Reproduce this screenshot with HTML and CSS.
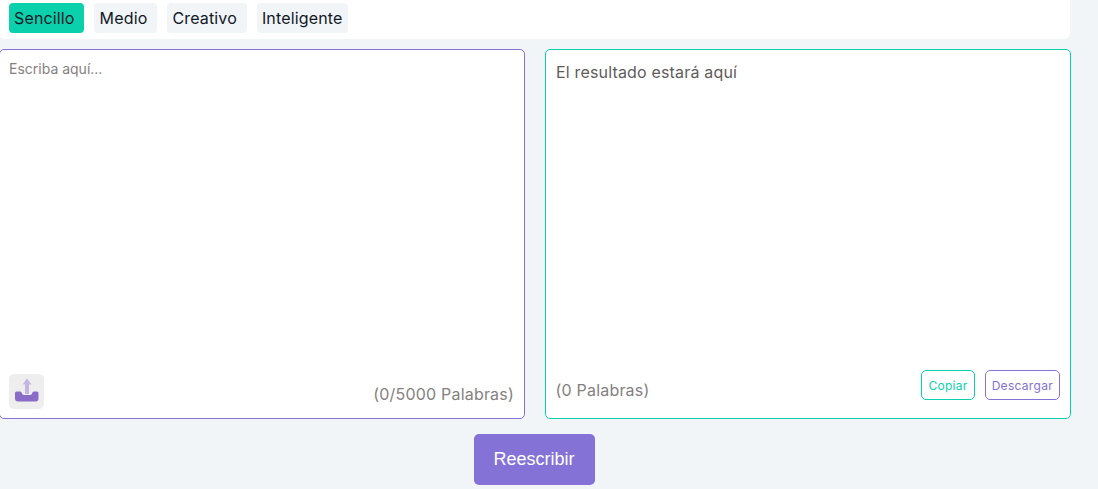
FILE: index.html
```html
<!DOCTYPE html>
<html lang="es">
<head>
    <meta charset="UTF-8">
    <meta name="viewport" content="width=device-width, initial-scale=1.0">
    <title>Reescribir</title>
    <link rel="stylesheet" href="styles.css">
</head>
<body>
    <div class="container">
        <!-- Mode tabs -->
        <nav class="modes">
            <a href="#" class="mode active">Sencillo</a>
            <a href="#" class="mode">Medio</a>
            <a href="#" class="mode">Creativo</a>
            <a href="#" class="mode">Inteligente</a>
        </nav>

        <!-- Input and result panels -->
        <section class="panels">
            <div class="panel panel-input">
                <textarea class="input" placeholder="Escriba aquí..."></textarea>
                <div class="panel-footer">
                    <button class="upload" aria-label="Subir archivo">
                        <svg width="24" height="28" viewBox="0 0 24 28">
                            <path class="arrow" d="M12 0.5 L16.5 6.5 H14 V16 H10 V6.5 H7.5 Z"/>
                            <path class="tray" d="M0 15 Q0 13.5 1.5 13.5 H5 Q6 13.5 6.5 14.5 L7 15.5 Q7.5 17 9 17 H15 Q16.5 17 17 15.5 L17.5 14.5 Q18 13.5 19 13.5 H22 Q23.5 13.5 23.5 15 V20.5 Q23.5 23.5 20.5 23.5 H3 Q0 23.5 0 20.5 Z"/>
                        </svg>
                    </button>
                    <span class="count">(0/5000 Palabras)</span>
                </div>
            </div>
            <div class="panel panel-output">
                <p class="result">El resultado estará aquí</p>
                <div class="panel-footer">
                    <span class="count">(0 Palabras)</span>
                    <div class="actions">
                        <button class="small copy">Copiar</button>
                        <button class="small download">Descargar</button>
                    </div>
                </div>
            </div>
        </section>

        <div class="submit-row">
            <button class="submit">Reescribir</button>
        </div>
    </div>
</body>
</html>
```

FILE: styles.css
```css
/* General layout */
html, body {
    height: 100%;
}
body {
    font-family: Inter, "Liberation Sans", sans-serif;
    background-color: #f1f5f8;
    margin: 0;
    overflow: hidden;
}
.container {
    width: 1072px;
    margin-left: -1px;
}

/* Mode tabs */
.modes {
    display: flex;
    gap: 10px;
    background: #fff;
    padding: 3px 10px 6px;
    margin-right: 1px;
    border-radius: 0 0 6px 6px;
}
.mode {
    height: 30px;
    line-height: 30px;
    padding: 0 10px 0 5px;
    font-size: 16px;
    letter-spacing: 0.15px;
    color: #111827;
    background-color: #f1f5f8;
    border-radius: 4px;
    text-decoration: none;
}
.mode:nth-child(2) {
    padding: 0 10px 0 6px;
}
.mode:last-child {
    padding-right: 5.5px;
}
.mode.active {
    padding-right: 9px;
    background-color: #0ad1ab;
}

/* Panels */
.panels {
    display: flex;
    gap: 20px;
    margin-top: 10px;
}
.panel {
    box-sizing: border-box;
    width: 526px;
    height: 370px;
    background: #fff;
    border: 1px solid #8472d6;
    border-radius: 5px;
    display: flex;
    flex-direction: column;
    justify-content: space-between;
}
.panel-output {
    border-color: #0ad1ab;
}
.input {
    flex: 1;
    border: 0;
    outline: 0;
    resize: none;
    background: transparent;
    padding: 10px 9px;
    font-family: inherit;
    font-size: 14px;
    line-height: 18px;
}
.input::placeholder {
    color: #857f7f;
}
.result {
    margin: 0;
    padding: 12px 10px;
    font-size: 16px;
    line-height: 20px;
    letter-spacing: 0.17px;
    color: #5f5c5c;
}
.panel-footer {
    display: flex;
    justify-content: space-between;
    align-items: flex-end;
}
.panel-input .panel-footer {
    padding: 0 10px 9px 9px;
}
.panel-output .panel-footer {
    padding: 0 10px 18px 9.5px;
}
.count {
    font-size: 16px;
    line-height: 20px;
    letter-spacing: 0.2px;
    color: #857f7f;
}
.panel-input .count {
    margin-bottom: 5px;
}

/* Buttons */
.upload {
    width: 35px;
    height: 35px;
    padding: 0;
    border: 0;
    border-radius: 5px;
    background-color: #eeeeee;
    display: flex;
    align-items: center;
    justify-content: center;
}
.upload .arrow {
    fill: #c4b5e4;
}
.upload .tray {
    fill: #8a6cc8;
}
.actions {
    display: flex;
    gap: 10px;
}
.small {
    box-sizing: border-box;
    height: 30px;
    padding: 0 6px;
    font-family: inherit;
    font-size: 12px;
    letter-spacing: 0.3px;
    background: #fff;
    border-radius: 5px;
    border: 1px solid #8472d6;
    color: #8472d6;
}
.small.copy {
    border-color: #0ad1ab;
    color: #0ad1ab;
}
.submit-row {
    display: flex;
    justify-content: center;
    margin-top: 15px;
    padding-right: 2px;
}
.submit {
    width: 121px;
    height: 51px;
    border: 0;
    border-radius: 5px;
    background-color: #8472d6;
    color: #fff;
    font-family: "Liberation Sans", sans-serif;
    font-size: 18px;
}
```
